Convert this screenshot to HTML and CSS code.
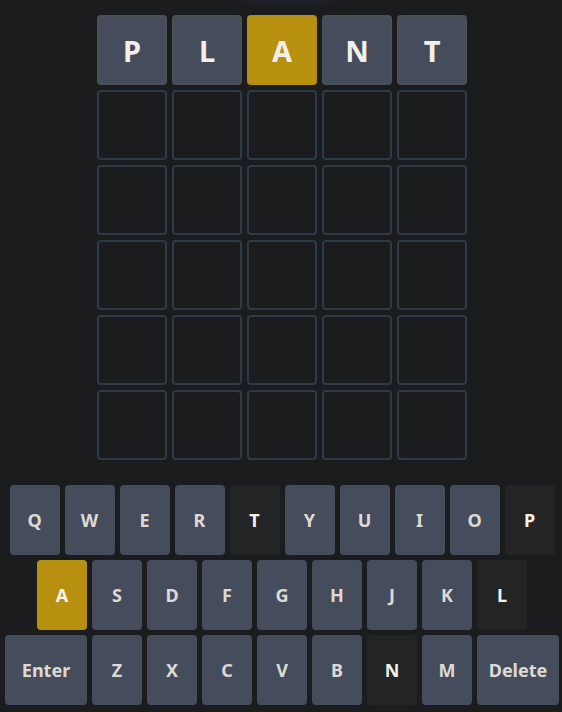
FILE: index.html
```html
<!DOCTYPE html>
<html>
<head>
<meta charset="utf-8">
<link rel="stylesheet" href="styles.css">
</head>
<body>
<div class="page">
  <div class="board">
    <div class="tile filled">P</div>
    <div class="tile filled">L</div>
    <div class="tile present">A</div>
    <div class="tile filled">N</div>
    <div class="tile filled">T</div>
    <div class="tile"></div><div class="tile"></div><div class="tile"></div><div class="tile"></div><div class="tile"></div>
    <div class="tile"></div><div class="tile"></div><div class="tile"></div><div class="tile"></div><div class="tile"></div>
    <div class="tile"></div><div class="tile"></div><div class="tile"></div><div class="tile"></div><div class="tile"></div>
    <div class="tile"></div><div class="tile"></div><div class="tile"></div><div class="tile"></div><div class="tile"></div>
    <div class="tile"></div><div class="tile"></div><div class="tile"></div><div class="tile"></div><div class="tile"></div>
  </div>
  <div class="keyboard">
    <div class="row">
      <div class="key">Q</div><div class="key">W</div><div class="key">E</div><div class="key">R</div><div class="key absent">T</div><div class="key">Y</div><div class="key">U</div><div class="key">I</div><div class="key">O</div><div class="key absent">P</div>
    </div>
    <div class="row">
      <div class="key present">A</div><div class="key">S</div><div class="key">D</div><div class="key">F</div><div class="key">G</div><div class="key">H</div><div class="key">J</div><div class="key">K</div><div class="key absent">L</div>
    </div>
    <div class="row">
      <div class="key wide">Enter</div><div class="key">Z</div><div class="key">X</div><div class="key">C</div><div class="key">V</div><div class="key">B</div><div class="key absent">N</div><div class="key">M</div><div class="key wide">Delete</div>
    </div>
  </div>
</div>
</body>
</html>
```

FILE: styles.css
```css
html, body {
  margin: 0;
  padding: 0;
  background: #1b1c1e;
  overflow: hidden;
}
body {
  font-family: "Noto Sans", "Open Sans", sans-serif;
}
.page {
  width: 564px;
  height: 712px;
  display: flex;
  flex-direction: column;
  align-items: center;
  background: radial-gradient(ellipse 70px 6px at 290px 0, #1d2230 0%, rgba(27,28,30,0) 100%);
}
.board {
  margin-top: 15px;
  display: grid;
  grid-template-columns: repeat(5, 70px);
  grid-auto-rows: 70px;
  gap: 5px;
}
.tile {
  box-sizing: border-box;
  border: 2px solid #2f3a49;
  border-radius: 4px;
  display: flex;
  align-items: center;
  justify-content: center;
  font-size: 29px;
  font-weight: 700;
  color: #f3f0ea;
}
.tile.filled {
  background: #454d5c;
  border-color: #4a4f58;
}
.tile.present {
  background: #b8900f;
  border-color: #b38d12;
}
.keyboard {
  margin-top: 25px;
  display: flex;
  flex-direction: column;
  align-items: center;
  gap: 5px;
}
.row {
  display: flex;
  gap: 5px;
}
.key {
  width: 50px;
  height: 70px;
  box-sizing: border-box;
  border-radius: 4px;
  background: #454d5d;
  color: #dedad3;
  display: flex;
  align-items: center;
  justify-content: center;
  font-size: 18px;
  font-weight: 700;
}
.key.wide {
  width: 82px;
}
.key.absent {
  background: #232524;
  color: #f4f1ea;
}
.key.present {
  background: #b8900f;
  color: #f4f1ea;
}
```
